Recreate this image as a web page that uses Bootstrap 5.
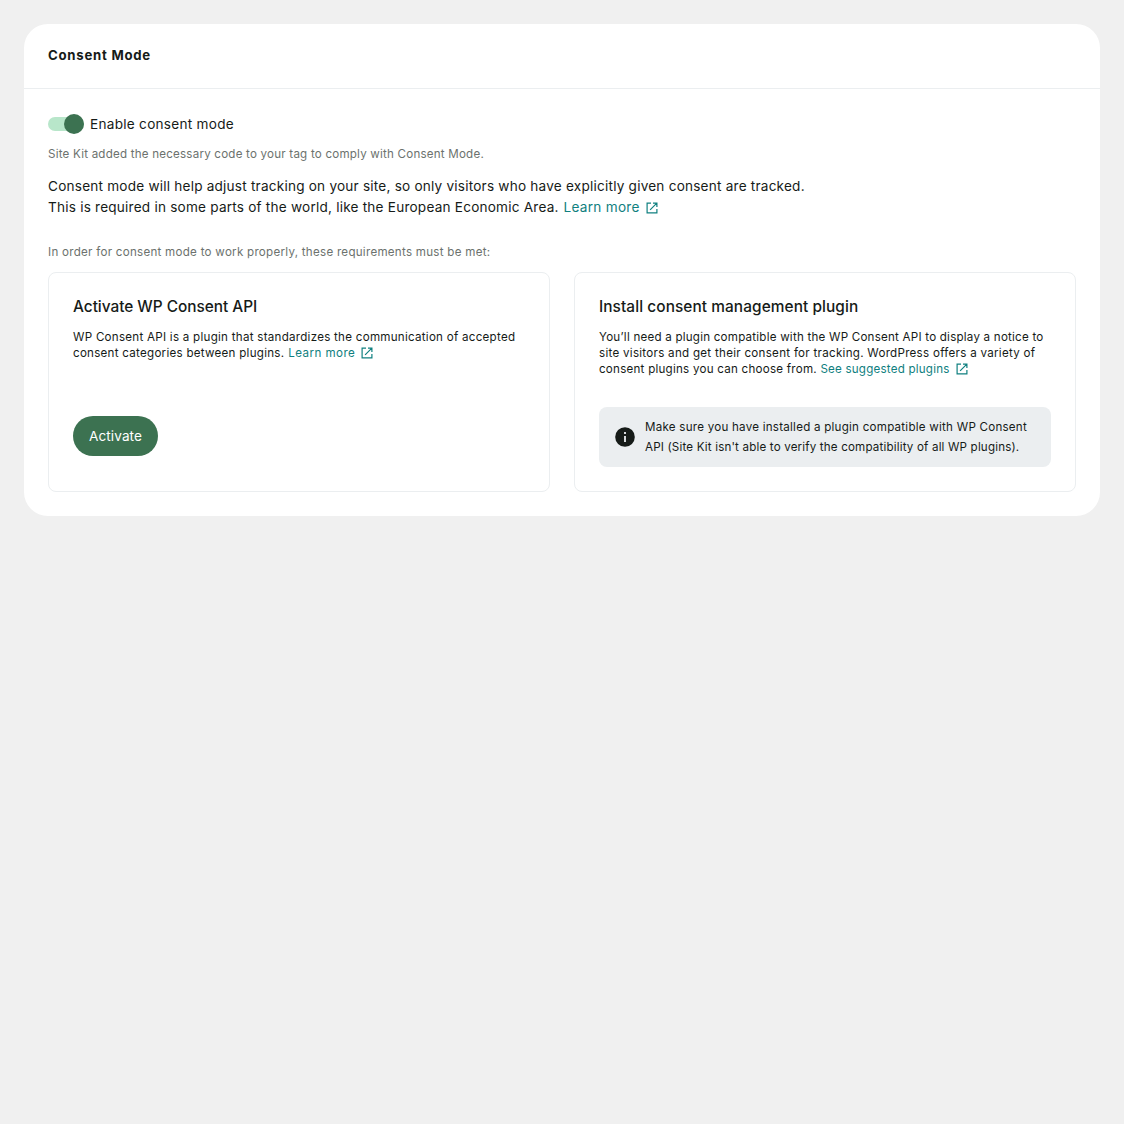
<!DOCTYPE html>
<html lang="en">
<head>
<meta charset="utf-8">
<meta name="viewport" content="width=device-width, initial-scale=1">
<title>Consent Mode</title>
<link href="https://cdn.jsdelivr.net/npm/bootstrap@5.3.0/dist/css/bootstrap.min.css" rel="stylesheet">
<style>
body{background:#f0f0f0;color:#161b18;font-family:Inter,"Liberation Sans",sans-serif;font-size:13.6px;line-height:21px}
.settings-card{border-radius:24px;height:492px}
.settings-head{height:65px;border-bottom:1px solid #ebeef0;padding-top:21px}
.settings-title{font-size:13.2px;line-height:20px;font-weight:700;letter-spacing:.74px}
.switch-row{height:20px;margin-top:25px;letter-spacing:.27px}
.switch-track{width:36px;height:14px;border-radius:7px;background:#b8e6ca;margin-right:6px}
.switch-knob{width:20px;height:20px;background:#3c7251}
.fine{font-size:11.6px;line-height:16px}
.status-note{margin-top:12px;color:#6c726e;letter-spacing:.207px}
.intro{margin-top:14px;letter-spacing:.211px}
.intro .teal-link{letter-spacing:.27px;margin-left:.8px}
.req-note{margin-top:26px;color:#6c726e;letter-spacing:.264px}
.teal-link{color:#108080;text-decoration:none}
.teal-link svg{width:12px;height:12px;margin-left:6px;vertical-align:-2px}
.intro .teal-link svg{vertical-align:-1.5px}
.req-list{margin-top:12px}
.req-card{border:1px solid #ebeef0;border-radius:8px;height:220px;padding:22px 24px 24px}
.req-title{font-size:15.4px;line-height:23px;font-weight:500;margin-bottom:11px;letter-spacing:-.02px}
.req-title-wide{letter-spacing:.08px}
.ls-last{letter-spacing:.17px}
.ls-3{letter-spacing:.22px}
.ls-5{letter-spacing:.24px}
.ls-7{letter-spacing:.262px}
.ls-10{letter-spacing:.276px}
.ls-20{letter-spacing:.43px;margin-left:.4px}
.ls-see{letter-spacing:.21px}
.activate,.activate:hover{width:85px;height:40px;background:#3c7251;color:#fff;border-radius:20px;font-size:13.6px;letter-spacing:.1px;margin-top:55px}
.notice{background:#ebeef0;border-radius:8px;height:60px;line-height:20px;margin-top:30px;padding-left:16px}
.notice svg{width:20px;height:20px;margin-right:10px}
</style>
<script src="https://cdn.jsdelivr.net/npm/bootstrap@5.3.0/dist/js/bootstrap.bundle.min.js"></script>
</head>
<body class="p-4">
<svg class="d-none" aria-hidden="true">
  <symbol id="external" viewBox="0 0 12 12"><path d="M5 1.1H1.1v9.8h9.8V7M7 1.1h3.9V5M10.6 1.4 4.1 7.9" fill="none" stroke="currentColor" stroke-width="1.2"/></symbol>
</svg>
<main class="settings-card bg-white">
  <header class="settings-head px-4"><h1 class="settings-title m-0">Consent Mode</h1></header>
  <section class="px-4">
    <div class="switch-row d-flex align-items-center">
      <div class="switch-track d-flex align-items-center justify-content-end" role="switch" aria-checked="true" aria-label="Enable consent mode"><div class="switch-knob rounded-circle flex-shrink-0"></div></div>
      <span>Enable consent mode</span>
    </div>
    <p class="fine status-note mb-0">Site Kit added the necessary code to your tag to comply with Consent Mode.</p>
    <p class="intro mb-0">Consent mode will help adjust tracking on your site, so only visitors who have explicitly given consent are tracked.<br>This is required in some parts of the world, like the European Economic Area. <a class="teal-link" href="#">Learn more<svg><use href="#external"/></svg></a></p>
    <p class="fine req-note mb-0">In order for consent mode to work properly, these requirements must be met:</p>
    <div class="req-list row">
      <div class="col-6">
        <div class="req-card">
          <h2 class="req-title">Activate WP Consent API</h2>
          <p class="fine mb-0 ls-7">WP Consent API is a plugin that standardizes the communication of accepted<br>consent categories between plugins. <a class="teal-link ls-20" href="#">Learn more<svg><use href="#external"/></svg></a></p>
          <button type="button" class="btn activate border-0 p-0">Activate</button>
        </div>
      </div>
      <div class="col-6">
        <div class="req-card">
          <h2 class="req-title req-title-wide">Install consent management plugin</h2>
          <p class="fine mb-0 ls-5"><span class="ls-3">You’ll need a plugin compatible with the WP Consent API to display a notice to</span><br><span class="ls-10">site visitors and get their consent for tracking. WordPress offers a variety of</span><br>consent plugins you can choose from. <a class="teal-link ls-see" href="#">See suggested plugins<svg><use href="#external"/></svg></a></p>
          <div class="notice fine d-flex align-items-center">
            <svg class="flex-shrink-0" viewBox="0 0 20 20"><circle cx="10" cy="10" r="9.8" fill="#161b18"/><path d="M9.1 9h1.8v6H9.1zM9.1 5h1.8v2H9.1z" fill="#ebeef0"/></svg>
            <div class="ls-5">Make sure you have installed a plugin compatible with WP Consent<br><span class="ls-last">API (Site Kit isn't able to verify the compatibility of all WP plugins).</span></div>
          </div>
        </div>
      </div>
    </div>
  </section>
</main>
</body>
</html>
